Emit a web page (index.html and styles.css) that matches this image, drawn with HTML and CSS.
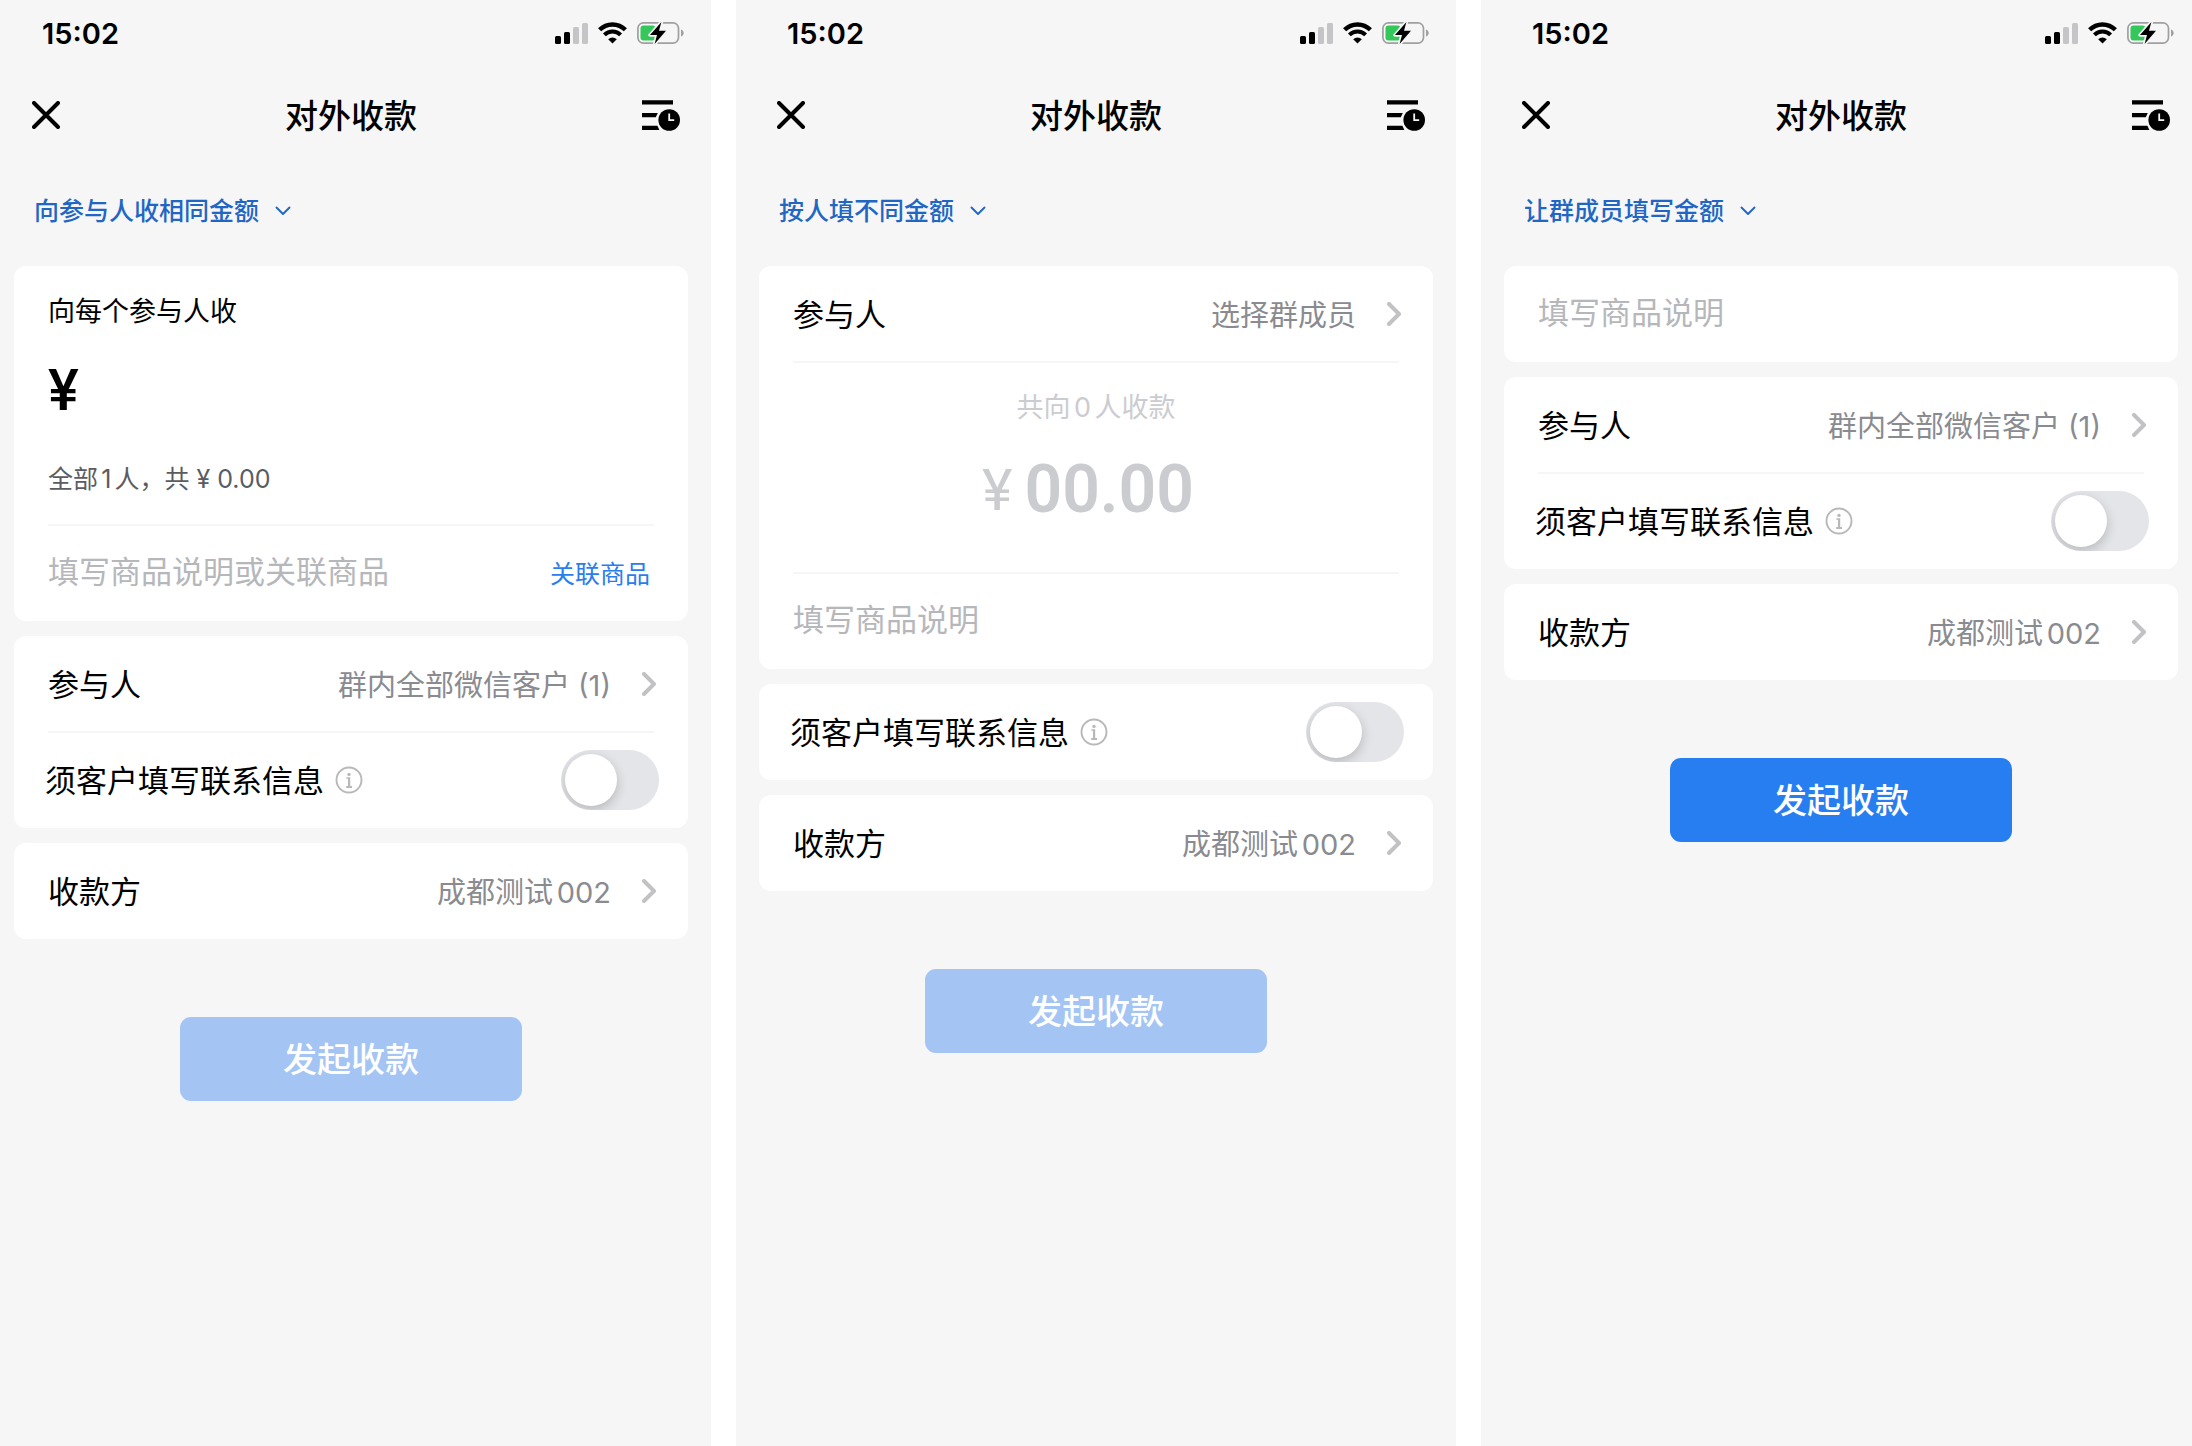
FILE: index.html
```html
<!DOCTYPE html>
<html lang="zh-CN">
<head>
    <meta charset="UTF-8">
    <meta name="viewport" content="width=device-width, initial-scale=1.0">
    <title>对外收款</title>
    <link rel="stylesheet" href="styles.css">
</head>
<body>
    <!-- shared icons -->
    <svg class="sprite" aria-hidden="true">
        <symbol id="icon-signal" viewBox="0 0 33 22">
            <rect x="0" y="14" width="6" height="8" rx="1.5"/>
            <rect x="9" y="10" width="6" height="12" rx="1.5"/>
            <rect x="18" y="5" width="6" height="17" rx="1.5" fill="#c5c5c7"/>
            <rect x="27" y="1" width="6" height="21" rx="1.5" fill="#c5c5c7"/>
        </symbol>
        <symbol id="icon-wifi" viewBox="0 0 29 22">
            <path d="M1.6 7.8a18.200 18.200 0 0 1 25.800 0" fill="none" stroke="#000" stroke-width="4.400"/>
            <path d="M6.400 12.900a11.400 11.400 0 0 1 16.200 0" fill="none" stroke="#000" stroke-width="4"/>
            <path d="M14.5 21.6l-4.3-4.3a6.2 6.2 0 0 1 8.6 0z"/>
        </symbol>
        <symbol id="icon-battery" viewBox="0 0 47 22">
            <rect x="0.9" y="0.9" width="40.6" height="20.2" rx="5.5" fill="none" stroke="#a0a0a3" stroke-width="1.7"/>
            <path d="M44 7.5c3.6 1.2 3.6 5.8 0 7z" fill="#a0a0a3"/>
            <rect x="3.5" y="3.6" width="15" height="14.8" rx="3" fill="#34c759"/>
            <path d="M24.4 0L13 13h7l-2.4 9L29 8.8h-7z" stroke="#f6f6f6" stroke-width="3.4" stroke-linejoin="round"/>
            <path d="M24.4 0L13 13h7l-2.4 9L29 8.8h-7z"/>
        </symbol>
        <symbol id="icon-close" viewBox="0 0 28 28">
            <path d="M2 2l24 24M26 2L2 26" fill="none" stroke="#000" stroke-width="4" stroke-linecap="round"/>
        </symbol>
        <symbol id="icon-history" viewBox="0 0 38 31">
            <path d="M0 0.2h31v4.4H0zM0 13h15.8l-2 4.2H0zM0 25.8h15.4l2 4.2H0z"/>
            <circle cx="27.2" cy="20" r="10.8"/>
            <path d="M27.2 13.6v6.6h5" fill="none" stroke="#f6f6f6" stroke-width="1.8"/>
        </symbol>
        <symbol id="icon-down" viewBox="0 0 16 10">
            <path d="M1.5 1.5L8 8l6.500-6.500" fill="none" stroke="#2266c4" stroke-width="1.9" stroke-linecap="round" stroke-linejoin="round"/>
        </symbol>
        <symbol id="icon-right" viewBox="0 0 14 24">
            <path d="M2 2l10 10L2 22" fill="none" stroke="#c2c2c4" stroke-width="4" stroke-linecap="round" stroke-linejoin="round"/>
        </symbol>
        <symbol id="icon-info" viewBox="0 0 28 28">
            <circle cx="14" cy="14" r="12.5" fill="none" stroke="#b8b8b8" stroke-width="1.9"/>
            <circle cx="14" cy="8.400" r="1.700" fill="#b8b8b8"/>
            <path d="M11.400 12h3v9" fill="none" stroke="#b8b8b8" stroke-width="1.600"/>
            <path d="M14 12v9M11.200 21h5.800" fill="none" stroke="#b8b8b8" stroke-width="2"/>
        </symbol>
    </svg>

    <main class="screens">
        <!-- same amount for everyone -->
        <section class="screen">
            <div class="status-bar">
                <span class="time">15:02</span>
                <svg class="signal"><use href="#icon-signal"/></svg>
                <svg class="wifi"><use href="#icon-wifi"/></svg>
                <svg class="battery"><use href="#icon-battery"/></svg>
            </div>
            <header class="nav">
                <button type="button" class="icon-btn" aria-label="关闭"><svg class="close"><use href="#icon-close"/></svg></button>
                <h1>对外收款</h1>
                <button type="button" class="icon-btn" aria-label="收款记录"><svg class="history"><use href="#icon-history"/></svg></button>
            </header>
            <form>
                <div class="mode">
                    <select aria-label="收款方式">
                        <option selected>向参与人收相同金额</option>
                        <option>按人填不同金额</option>
                        <option>让群成员填写金额</option>
                    </select>
                    <svg class="down"><use href="#icon-down"/></svg>
                </div>
                <div class="card">
                    <div class="amount">
                        <label for="amount">向每个参与人收</label>
                        <div class="amount-field">
                            <span class="yen">¥</span>
                            <input type="text" id="amount" inputmode="decimal">
                        </div>
                        <p class="total">全部1人，共 ¥ 0.00</p>
                    </div>
                    <div class="row">
                        <input type="text" class="desc" placeholder="填写商品说明或关联商品" aria-label="商品说明">
                        <a href="#" class="link">关联商品</a>
                    </div>
                </div>
                <div class="card">
                    <button type="button" class="row">
                        <span class="name">参与人</span>
                        <span class="value">群内全部微信客户 (1)</span>
                        <svg class="right"><use href="#icon-right"/></svg>
                    </button>
                    <div class="row switch-row">
                        <label for="contact1" class="name">须客户填写联系信息</label>
                        <svg class="info"><use href="#icon-info"/></svg>
                        <input type="checkbox" class="switch" id="contact1">
                    </div>
                </div>
                <div class="card">
                    <button type="button" class="row">
                        <span class="name">收款方</span>
                        <span class="value">成都测试002</span>
                        <svg class="right"><use href="#icon-right"/></svg>
                    </button>
                </div>
                <button type="submit" class="submit" disabled>发起收款</button>
            </form>
        </section>

        <!-- different amount per person -->
        <section class="screen">
            <div class="status-bar">
                <span class="time">15:02</span>
                <svg class="signal"><use href="#icon-signal"/></svg>
                <svg class="wifi"><use href="#icon-wifi"/></svg>
                <svg class="battery"><use href="#icon-battery"/></svg>
            </div>
            <header class="nav">
                <button type="button" class="icon-btn" aria-label="关闭"><svg class="close"><use href="#icon-close"/></svg></button>
                <h1>对外收款</h1>
                <button type="button" class="icon-btn" aria-label="收款记录"><svg class="history"><use href="#icon-history"/></svg></button>
            </header>
            <form>
                <div class="mode">
                    <select aria-label="收款方式">
                        <option>向参与人收相同金额</option>
                        <option selected>按人填不同金额</option>
                        <option>让群成员填写金额</option>
                    </select>
                    <svg class="down"><use href="#icon-down"/></svg>
                </div>
                <div class="card">
                    <button type="button" class="row">
                        <span class="name">参与人</span>
                        <span class="value">选择群成员</span>
                        <svg class="right"><use href="#icon-right"/></svg>
                    </button>
                    <div class="summary">
                        <p class="summary-title">共向0人收款</p>
                        <p class="summary-total"><span class="yen">¥</span><span class="number">00.00</span></p>
                    </div>
                    <div class="row">
                        <input type="text" class="desc" placeholder="填写商品说明" aria-label="商品说明">
                    </div>
                </div>
                <div class="card">
                    <div class="row switch-row">
                        <label for="contact2" class="name">须客户填写联系信息</label>
                        <svg class="info"><use href="#icon-info"/></svg>
                        <input type="checkbox" class="switch" id="contact2">
                    </div>
                </div>
                <div class="card">
                    <button type="button" class="row">
                        <span class="name">收款方</span>
                        <span class="value">成都测试002</span>
                        <svg class="right"><use href="#icon-right"/></svg>
                    </button>
                </div>
                <button type="submit" class="submit" disabled>发起收款</button>
            </form>
        </section>

        <!-- members fill in the amount -->
        <section class="screen">
            <div class="status-bar">
                <span class="time">15:02</span>
                <svg class="signal"><use href="#icon-signal"/></svg>
                <svg class="wifi"><use href="#icon-wifi"/></svg>
                <svg class="battery"><use href="#icon-battery"/></svg>
            </div>
            <header class="nav">
                <button type="button" class="icon-btn" aria-label="关闭"><svg class="close"><use href="#icon-close"/></svg></button>
                <h1>对外收款</h1>
                <button type="button" class="icon-btn" aria-label="收款记录"><svg class="history"><use href="#icon-history"/></svg></button>
            </header>
            <form>
                <div class="mode">
                    <select aria-label="收款方式">
                        <option>向参与人收相同金额</option>
                        <option>按人填不同金额</option>
                        <option selected>让群成员填写金额</option>
                    </select>
                    <svg class="down"><use href="#icon-down"/></svg>
                </div>
                <div class="card">
                    <div class="row">
                        <input type="text" class="desc" placeholder="填写商品说明" aria-label="商品说明">
                    </div>
                </div>
                <div class="card">
                    <button type="button" class="row">
                        <span class="name">参与人</span>
                        <span class="value">群内全部微信客户 (1)</span>
                        <svg class="right"><use href="#icon-right"/></svg>
                    </button>
                    <div class="row switch-row">
                        <label for="contact3" class="name">须客户填写联系信息</label>
                        <svg class="info"><use href="#icon-info"/></svg>
                        <input type="checkbox" class="switch" id="contact3">
                    </div>
                </div>
                <div class="card">
                    <button type="button" class="row">
                        <span class="name">收款方</span>
                        <span class="value">成都测试002</span>
                        <svg class="right"><use href="#icon-right"/></svg>
                    </button>
                </div>
                <button type="submit" class="submit">发起收款</button>
            </form>
        </section>
    </main>
</body>
</html>
```

FILE: styles.css
```css
* {
    box-sizing: border-box;
}
body {
    margin: 0;
    background: #fff;
    color: #000;
    font-family: Inter, "Noto Sans CJK SC", sans-serif;
    text-autospace: normal;
}
button, input, select {
    font: inherit;
    color: inherit;
    margin: 0;
    padding: 0;
    border: none;
    background: none;
}
button, select, a {
    cursor: pointer;
}
h1, p {
    margin: 0;
}
svg {
    flex: none;
}
.sprite {
    display: none;
}

.screens {
    display: grid;
    grid-template-columns: 711fr 720fr 711fr;
    gap: 25px;
    min-height: 100vh;
}
.screen {
    min-width: 0;
    padding: 0 23px;
    background: #f6f6f6;
}
.screen:first-child {
    padding-left: 14px;
}
.screen:last-child {
    padding-right: 14px;
}

/* status bar */
.status-bar {
    display: flex;
    align-items: center;
    gap: 10px;
    height: 66px;
    padding: 0 4px 0 28px;
}
.time {
    margin-right: auto;
    font-size: 29px;
    font-weight: 600;
}
.signal {
    width: 33px;
    height: 22px;
}
.wifi {
    width: 29px;
    height: 22px;
}
.battery {
    width: 47px;
    height: 22px;
}

/* title bar */
.nav {
    display: flex;
    align-items: center;
    justify-content: space-between;
    height: 98px;
    padding: 0 8px;
}
.nav h1 {
    padding-bottom: 2px;
    font-size: 33px;
    font-weight: 500;
}
.icon-btn {
    display: flex;
    justify-content: flex-end;
    width: 38px;
}
.close {
    width: 28px;
    height: 28px;
}
.history {
    width: 38px;
    height: 31px;
}

.mode {
    display: flex;
    align-items: center;
    gap: 16px;
    height: 94px;
    margin-bottom: 8px;
    padding: 0 20px;
    color: #2266c4;
    font-size: 25px;
    font-weight: 500;
}
.mode select {
    appearance: none;
    field-sizing: content;
}
.down {
    width: 16px;
    height: 10px;
}

.card {
    margin-bottom: 15px;
    background: #fff;
    border-radius: 12px;
}
.row {
    display: flex;
    align-items: center;
    width: 100%;
    height: 96px;
    padding: 0 32px 0 34px;
    font-size: 31px;
}
/* hairline between two rows of a card */
.card > * + *::before {
    content: "";
    position: absolute;
    top: -1px;
    left: 34px;
    right: 34px;
    height: 2px;
    background: #f6f6f6;
}
.card > * {
    position: relative;
}
.name, .value, .desc, .link {
    padding-bottom: 3px;
}
.value {
    margin-left: auto;
    margin-right: 31px;
    color: #8a8b90;
    font-size: 29px;
}
.right {
    width: 14px;
    height: 24px;
}
.desc {
    flex: 1;
    min-width: 0;
}
.desc::placeholder {
    color: #b6b7bb;
    opacity: 1;
}
.link {
    margin: 0 6px 0 16px;
    color: #2a7def;
    font-size: 25px;
    text-decoration: none;
}

.amount {
    padding: 26px 34px;
}
.amount label {
    display: block;
    font-size: 27px;
    line-height: 40px;
}
.amount-field {
    display: flex;
    align-items: center;
    gap: 12px;
    margin: 28px 0 39px;
    font-size: 58px;
    line-height: 60px;
}
.amount-field input {
    flex: 1;
    min-width: 0;
    height: 60px;
}
.yen {
    font-family: Roboto, sans-serif;
    font-weight: 500;
}
.total {
    color: #5b5c61;
    font-size: 25px;
    line-height: 40px;
}

.summary {
    padding: 26px 34px 43px;
    color: #cbccd0;
    text-align: center;
}
.summary-title {
    font-size: 27px;
    line-height: 40px;
}
.summary-total {
    display: flex;
    align-items: center;
    justify-content: center;
    gap: 12px;
    margin-top: 22px;
    padding-right: 16px;
    line-height: 80px;
}
.summary-total .yen {
    font-size: 58px;
    font-weight: 400;
}
.number {
    font-family: Roboto, sans-serif;
    font-size: 66px;
    font-weight: 600;
}

.switch-row {
    padding: 0 29px 0 31px;
}
.info {
    width: 28px;
    height: 28px;
    margin-left: 11px;
}
.switch {
    appearance: none;
    width: 98px;
    height: 60px;
    margin-left: auto;
    padding: 4px;
    border-radius: 30px;
    background: #e4e5e9;
    overflow: hidden;
    cursor: pointer;
}
.switch::before {
    content: "";
    display: block;
    width: 52px;
    height: 52px;
    border-radius: 50%;
    background: #fff;
    box-shadow: 0 4px 12px rgba(0, 0, 0, 0.2);
}
.switch:checked {
    background: #277ef0;
}
.switch:checked::before {
    margin-left: 38px;
}

.submit {
    display: block;
    width: 342px;
    max-width: 100%;
    height: 84px;
    margin: 78px auto 0;
    padding-bottom: 3px;
    border-radius: 11px;
    background: #277ef0;
    color: #fff;
    font-size: 34px;
    font-weight: 500;
}
.submit:disabled {
    background: #a4c5f4;
    cursor: default;
}
```
